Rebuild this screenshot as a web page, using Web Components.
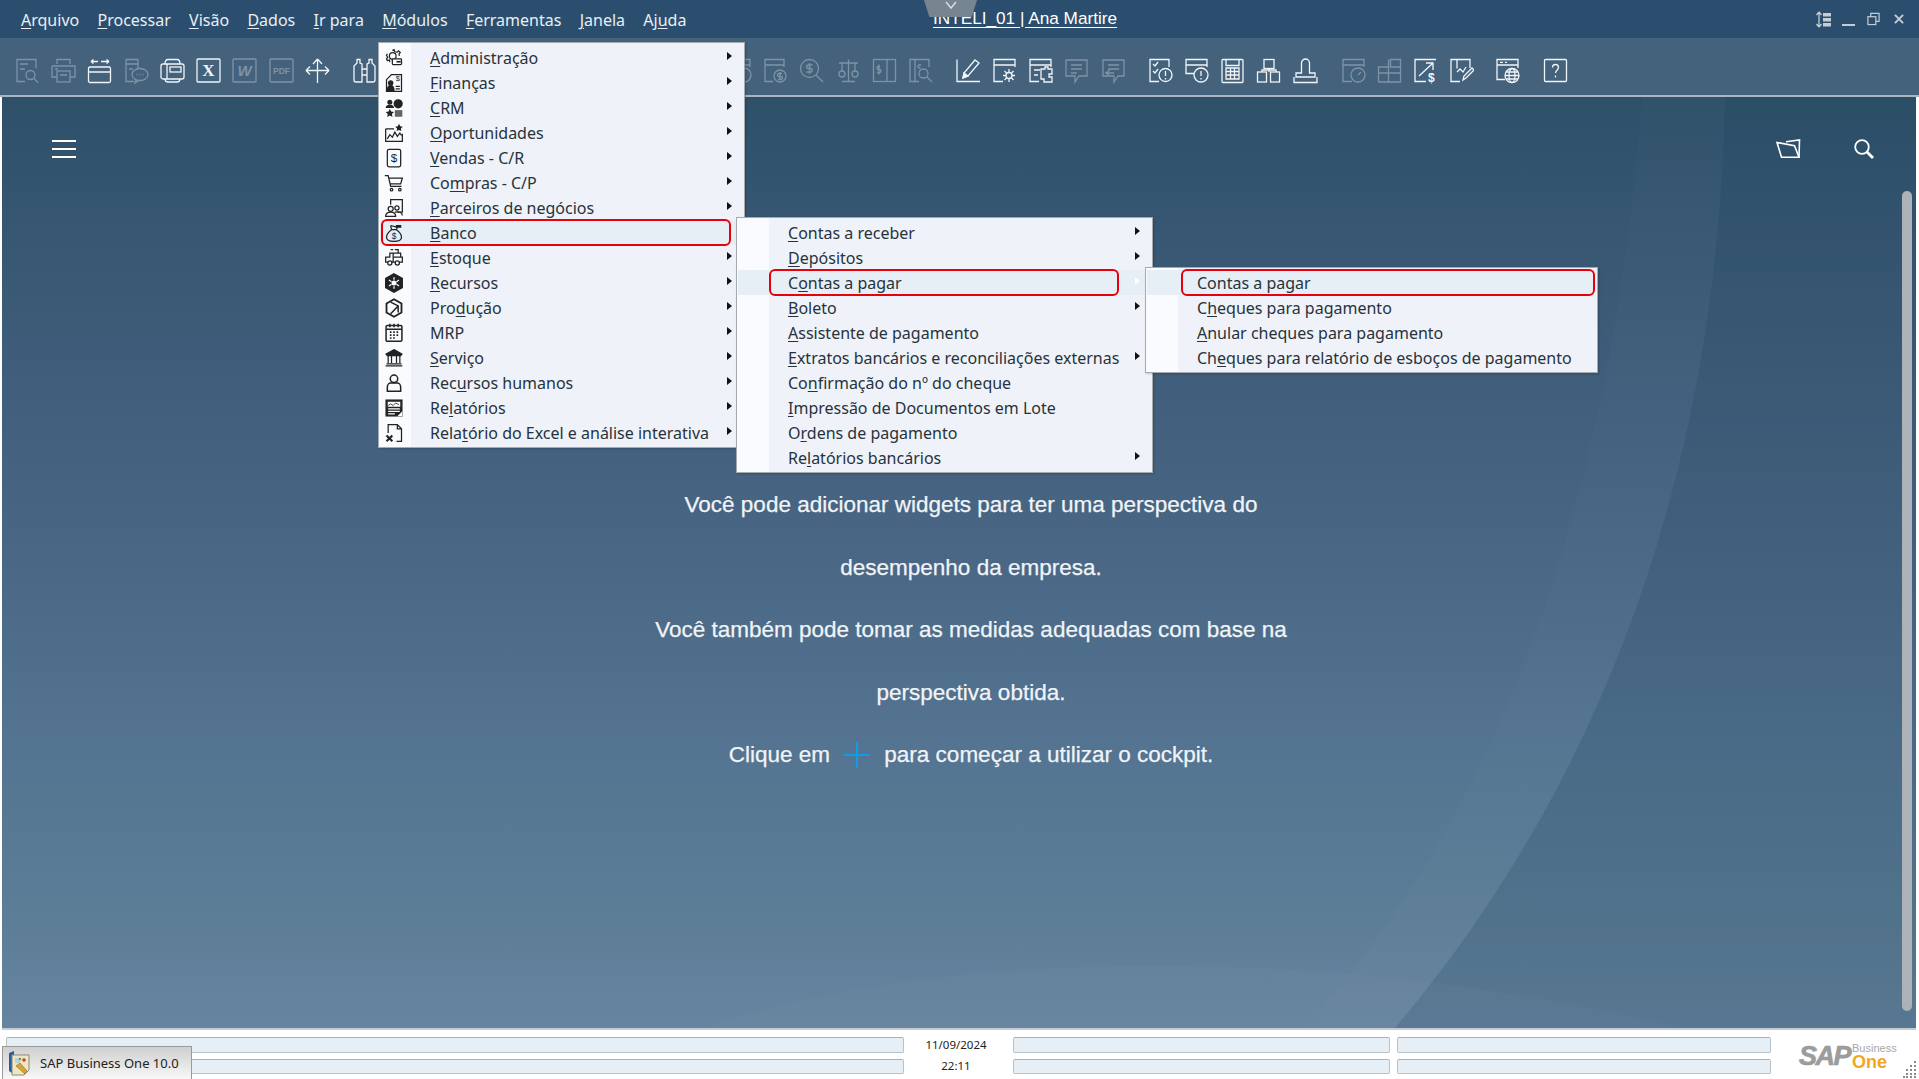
<!DOCTYPE html>
<html lang="pt-BR">
<head>
<meta charset="utf-8">
<title>SAP Business One</title>
<style>
  html, body { margin: 0; height: 100%; overflow: hidden; background: #fff; }
  sap-app { font-family: "Noto Sans", "Open Sans", sans-serif; }
  u { text-underline-offset: 2px; text-decoration-thickness: 1px; }
</style>
</head>
<body>
<sap-app>
  <title-bar></title-bar>
  <tool-bar></tool-bar>
  <cockpit-area></cockpit-area>
  <status-strip></status-strip>

  <pop-menu style="left:378px;top:42px;width:363px">
    <menu-row icon="admin" arrow><u>A</u>dministração</menu-row>
    <menu-row icon="fin" arrow><u>F</u>inanças</menu-row>
    <menu-row icon="crm" arrow><u>C</u>RM</menu-row>
    <menu-row icon="oport" arrow><u>O</u>portunidades</menu-row>
    <menu-row icon="vendas" arrow><u>V</u>endas - C/R</menu-row>
    <menu-row icon="cart" arrow>Co<u>m</u>pras - C/P</menu-row>
    <menu-row icon="partners" arrow><u>P</u>arceiros de negócios</menu-row>
    <menu-row icon="bag" selected style="--ring-l:1px;--ring-r:12px"><u>B</u>anco</menu-row>
    <menu-row icon="truck" arrow><u>E</u>stoque</menu-row>
    <menu-row icon="hex" arrow><u>R</u>ecursos</menu-row>
    <menu-row icon="cube" arrow>Pro<u>d</u>ução</menu-row>
    <menu-row icon="cal" arrow>MRP</menu-row>
    <menu-row icon="bank" arrow><u>S</u>erviço</menu-row>
    <menu-row icon="person" arrow>Rec<u>u</u>rsos humanos</menu-row>
    <menu-row icon="report" arrow>Re<u>l</u>atórios</menu-row>
    <menu-row icon="xls" arrow>Rela<u>t</u>ório do Excel e análise interativa</menu-row>
  </pop-menu>

  <pop-menu style="left:736px;top:217px;width:413px">
    <menu-row arrow><u>C</u>ontas a receber</menu-row>
    <menu-row arrow><u>D</u>epósitos</menu-row>
    <menu-row arrow selected style="--ring-l:31px;--ring-r:32px">C<u>o</u>ntas a pagar</menu-row>
    <menu-row arrow><u>B</u>oleto</menu-row>
    <menu-row><u>A</u>ssistente de pagamento</menu-row>
    <menu-row arrow><u>E</u>xtratos bancários e reconciliações externas</menu-row>
    <menu-row>Co<u>n</u>firmação do nº do cheque</menu-row>
    <menu-row><u>I</u>mpressão de Documentos em Lote</menu-row>
    <menu-row>O<u>r</u>dens de pagamento</menu-row>
    <menu-row arrow>Re<u>l</u>atórios bancários</menu-row>
  </pop-menu>

  <pop-menu style="left:1145px;top:267px;width:449px">
    <menu-row selected style="--ring-l:34px;--ring-r:1px">Contas a pagar</menu-row>
    <menu-row>C<u>h</u>eques para pagamento</menu-row>
    <menu-row><u>A</u>nular cheques para pagamento</menu-row>
    <menu-row>Ch<u>e</u>ques para relatório de esboços de pagamento</menu-row>
  </pop-menu>
</sap-app>

<script>
// toolbar glyphs, drawn on a 25x25 box
const TOOL = {
  find: '<path d="M21 10V1.500H2v22h8M5 6h8M5 11h5"/><circle cx="15.500" cy="17" r="4.500"/><path d="M19 20.500l4 4"/>',
  print: '<path d="M6 6V1.500h13V6M1 8h23v11h-5M6 19H1V8"/><rect x="6" y="13" width="13" height="11"/><path d="M4 11h3M9 17h7"/>',
  cal: '<rect x="1.500" y="9" width="22" height="15.500" rx="1.500"/><path d="M1.500 14h22M4 3.500h7M4 3.500l2.500-2M4 3.500l2.500 2M14 3.500h8M22 3.500l-2.500-2M22 3.500l-2.500 2"/>',
  chat: '<path d="M14 10V1.500H2v22h8M2 6h12M5 11h4"/><ellipse cx="16" cy="16.500" rx="8" ry="6"/><path d="M12 22l-1 3 4-2.500"/><path d="M12.500 16.500h1M15.500 16.500h1M18.500 16.500h1"/>',
  book: '<rect x="1" y="6" width="23" height="15" rx="2"/><path d="M5 6c0-3 1-4.500 3-4.500h9c2 0 3 1.500 3 4.500M5 21c0 2 1 3 3 3h9c2 0 3-1 3-3M7 6v15"/><rect x="10" y="9" width="11" height="5"/>',
  move: '<path d="M12.500 1v24M1 12.500h23M12.500 1L8 6M12.500 1L17 6M1 12.500L5 8.500M1 12.500l4 4M24 12.500l-4-4M24 12.500l-4 4"/>',
  bino: '<path d="M2 8v14a2 2 0 002 2h6V6L8 5V1.500H5V5zM23 8v14a2 2 0 01-2 2h-6V6l2-1V1.500h3V5zM10 11h5M10 17h5"/>',
  formc: '<path d="M21 9V1.500H2v22h8M2 7h19"/><circle cx="17" cy="18" r="6"/><path d="M17 14v8M19 15.500h-3a1.300 1.300 0 000 3h2a1.300 1.300 0 010 3h-3"/>',
  coin: '<circle cx="10.500" cy="10.500" r="9"/><path d="M10.500 5v11M13.500 7h-4.500a1.800 1.800 0 000 3.500h3a1.800 1.800 0 010 3.500H7.500M17 17l7 7"/>',
  scale: '<path d="M12.500 1.500v22M6 23.500h13M3 5h19M6 5v8M19 5v8"/><rect x="3" y="13" width="6" height="6" rx="3"/><rect x="16" y="13" width="6" height="6" rx="3"/>',
  split: '<rect x="1.500" y="1.500" width="22" height="22"/><path d="M15 1.500v22M8 8.500H6.500a1.300 1.300 0 000 3h1a1.300 1.300 0 010 3H5M6.800 6.500v10"/>',
  dsearch: '<path d="M21 9V1.500H2v22h9M7 1.500v22M13 7h-1.500a1.200 1.200 0 000 3h1"/><circle cx="15.500" cy="15.500" r="4.500"/><path d="M19 19l5 5"/>',
  pencil: '<path d="M2 1.500v22h23M8 20l1-5L20 2l4 3-11 13z"/><path d="M8 20l5-2-4-3z" fill="currentColor"/>',
  fgear: '<path d="M23 9V1.500H2v22h9M2 7h21"/><circle cx="17" cy="17.500" r="3"/><path d="M17 11v3M17 21v3M11 17.500h3M20 17.500h3M12.500 13l2 2M19.500 20l2 2M12.500 22l2-2M19.500 15l2-2"/>',
  puzzle: '<path d="M23 9V1.500H2v22h9M2 7h21M6 12h6M6 17h4"/><path d="M13 11h4v-2h3v2h4v5h-3v3h3v5h-8v-3h-3z"/>',
  bubble: '<path d="M2 2h21v16h-8l-4 6v-6H2zM7 7h11M7 11h11M7 15h6"/>',
  bubble2: '<path d="M2 2h21v16h-6l-4 6v-6H2zM7 7h11M7 11h11"/><path d="M4 15h9M9 12l-4 3 4 3"/>',
  chkdoc: '<path d="M21 9V1.500H2v22h9M5 6l2 2 3-4M5 13l2 2 3-4"/><circle cx="17.500" cy="17" r="6.500"/><path d="M17.500 13v5M17.500 20v1.500"/>',
  falert: '<path d="M23 9V1.500H2v14h8M2 7h21"/><circle cx="17" cy="17" r="7"/><path d="M17 13v5M17 20v1.500"/>',
  calc: '<rect x="2" y="1.500" width="21" height="23" rx="1"/><path d="M6 1.500v6h13v-6M6 10h13v11H6zM10.500 10v11M14.500 10v11M6 13.500h13M6 17h13"/>',
  org: '<rect x="8" y="1.500" width="10" height="9"/><rect x="1.500" y="14" width="9" height="10"/><rect x="14.500" y="14" width="9" height="10"/><path d="M13 10.500V14M6 14v-2h14v2"/>',
  stamp: '<path d="M8.500 11V5a4 4 0 018 0v6M8.500 11v4H3v4h19v-4h-5.500v-4"/><path d="M1 19v5.500h23V19"/>',
  gauge: '<path d="M23 9V1.500H2v22h9M2 7h21"/><circle cx="17" cy="17" r="7"/><path d="M17 17l3-3"/>',
  gift: '<path d="M1.500 24V9h10V1.500M1.500 24h22V9h-10V1.500h10V9M11.500 9v15M1.500 15h22"/>',
  arrow: '<path d="M23 1.500H2v22h11M6 18L20 5M13 5h7v7"/><text x="15" y="24" font-family="Liberation Sans" font-size="12" font-weight="700" fill="currentColor" stroke="none">$</text>',
  edit: '<path d="M21 10V1.500H2v22h9M8 1.500v9M8 14l3-3 3 3 3-5"/><path d="M14 22l1-4 8-8 2 2-8 8z"/>',
  globe: '<path d="M23 10V1.500H2v20h8M2 7h21M5 4.300h3M10 4.300h2"/><circle cx="17" cy="17.500" r="7"/><path d="M10 17.500h14M11 14h12M11 21h12"/><ellipse cx="17" cy="17.500" rx="3" ry="7"/>',
  help: '<rect x="1.500" y="1.500" width="22" height="22" rx="1"/><path d="M9.500 9.500c0-4 6-4 6 0 0 2.500-3 3-3 5.500M12.500 17.500v2"/>',
};

// menu glyphs, drawn on a 24x24 box
const MENU = {
  admin: '<path d="M10 3l2-1 1 2.500 3 .5 1.500-1.500 2 2L18 7l.5 2.500M4 7l-1 2 1.500 2L3 13l1 2 2.500-.500L7 17"/><circle cx="10.500" cy="9.500" r="4"/><rect x="10" y="13" width="11" height="7" rx="1" fill="#fff"/><path d="M15 16.500h5" stroke-width="2"/>',
  fin: '<path d="M9 2h12v20H3V8z"/><path d="M4 21c0-5 2-6 4-6s4 1 4 6z" fill="#222"/><circle cx="8" cy="12" r="2.500" fill="#222"/><path d="M14 16h5M14 19h5"/><text x="14" y="10" font-size="9" fill="#222" stroke="none" font-family="Liberation Sans">$</text>',
  crm: '<g fill="#222" stroke="none"><circle cx="7" cy="5" r="3"/><path d="M2 12c0-3 2-4 5-4s5 1 5 4z"/><circle cx="17" cy="7" r="5.500"/><path d="M7 13l1.500 3.300 3.500.4-2.500 2.500.7 3.500L7 21l-3.200 1.700.7-3.500L2 16.700l3.500-.4z"/><path fill="#666" d="M13 14.500h9v8h-9z"/></g>',
  oport: '<path d="M2 7h10M2 7v15h20v-9M4 19l3-5 3 3 3-6 3 5 3-4 2 3"/><path d="M18 1l1.500 3 3 .5-2.200 2.200.5 3L18 8.300l-2.800 1.400.5-3-2.200-2.200 3-.5z" fill="#222" stroke="none"/>',
  vendas: '<rect x="4" y="1.500" width="16" height="21" rx="2"/><text x="12" y="17" font-size="14" text-anchor="middle" fill="#222" stroke="none" font-family="Liberation Sans">$</text>',
  cart: '<path d="M1 3h4l3 13h13M6 6h16l-2 7H8"/><circle cx="9" cy="20" r="1.500"/><circle cx="19" cy="20" r="1.500"/>',
  partners: '<path d="M8 8V2h14v15h-6"/><circle cx="8" cy="13" r="3"/><circle cx="15.500" cy="12" r="2.500"/><path d="M2 22c0-4 2-5 6-5s6 1 6 5zM13 17c5-1 9 0 9 4"/>',
  bag: '<path d="M8 3l7 2 5-2M9 8h6M9 8C5 11 3 14 3 17c0 3 3 5 9 5s9-2 9-5c0-3-2-6-6-9M9 8L8 3M15 8l1-3"/><path d="M15 3h5v2h-5z" fill="#222"/><text x="12" y="19" font-size="10" text-anchor="middle" fill="#222" stroke="none" font-family="Liberation Sans">$</text>',
  truck: '<path d="M2 16V11h5V6h4v5M11 6h9v5M2 11v6h3M9 17h5M18 17h4v-6H11v6M13 2h4v4M8 2h3"/><circle cx="7" cy="18" r="2.500"/><circle cx="16" cy="18" r="2.500"/>',
  hex: '<path d="M12 1l10 5.500v11L12 23 2 17.500v-11z" fill="#222"/><circle cx="12" cy="12" r="3" fill="#fff" stroke="none"/><path d="M12 5v3M12 16v3M6 8.500l3 2M18 8.500l-3 2M6 15.500l3-2M18 15.500l-3-2" stroke="#fff"/>',
  cube: '<path d="M12 1.500l9 5v11l-9 5-9-5v-11z" stroke-width="2.200"/><path d="M8 5l9 4.500v8M17 9.500L8 19" stroke-width="1.800"/>',
  cal: '<rect x="2.500" y="3" width="19" height="19" rx="1.500" stroke-width="1.800"/><path d="M2.500 7.500h19M7 1v4M12 1v4M17 1v4" stroke-width="1.800"/><path d="M7 11h2M11 11h2M15 11h2M7 14.500h2M11 14.500h2M15 14.500h2M7 18h2M11 18h2" stroke-width="2"/>',
  bank: '<path d="M12 2l10 5.500H2z" fill="#222"/><path d="M3 9h18M5 10v8M9 10v8M15 10v8M19 10v8M3 19h18M2 21.500h20" stroke-width="1.500"/>',
  person: '<circle cx="12" cy="7" r="4.500" stroke-width="1.800"/><path d="M4 22v-5c0-3 2-5 4-5h8c2 0 4 2 4 5v5z" stroke-width="1.800"/>',
  report: '<rect x="2.500" y="2.500" width="19" height="19" fill="#222"/><rect x="4.500" y="4.500" width="15" height="6" fill="#fff" stroke="none"/><path d="M5 9l3-2 3 2 3-3 4 2" stroke-width="1"/><path d="M5 13h14M5 16h14M5 19h8" stroke="#fff" stroke-width="1.300"/><path d="M16 22l6-6v6z" fill="#fff" stroke="none"/>',
  xls: '<path d="M5 12V2h11l5 5v15h-6M16 2v5h5"/><path d="M3 15l7 7M10 15l-7 7" stroke-width="2.500"/>',
};

class SapApp extends HTMLElement {
  constructor() {
    super();
    this.attachShadow({ mode: 'open' }).innerHTML = `
      <style>
        :host { display: grid; grid-template-rows: 38px 59px 933px 49px; position: relative; height: 1079px; overflow: hidden; }
      </style>
      <slot></slot>`;
  }
}

class TitleBar extends HTMLElement {
  constructor() {
    super();
    const items = [['A','rquivo'],['P','rocessar'],['V','isão'],['D','ados'],['I','r para'],['M','ódulos'],['F','erramentas'],['J','anela']];
    this.attachShadow({ mode: 'open' }).innerHTML = `
      <style>
        :host { display: grid; grid-template-columns: 933px auto 1fr; align-items: center; background: #2b4e6e; color: #e9eef3; position: relative; }
        nav { display: flex; gap: 18.300px; padding: 1px 0 0 21px; font: 16px "Noto Sans", sans-serif; }
        u { text-underline-offset: 2px; text-decoration-thickness: 1px; }
        .title { font: 17.200px "Liberation Sans", sans-serif; color: #fff; text-decoration: underline; text-underline-offset: 3px; white-space: nowrap; margin-top: -2px; }
        .ctl { display: flex; justify-content: flex-end; align-items: center; padding-right: 15px; color: #c4ccd4; }
        .ctl svg + svg { margin-left: 10px; }
        .ctl svg:nth-child(3) { margin-left: 12px; }
        .ctl svg:nth-child(4) { margin-left: 14px; }
        .tab { position: absolute; left: 924px; top: 0; width: 53px; height: 17px; background: #76858f; clip-path: polygon(0 0, 100% 0, 90% 100%, 10% 100%); display: flex; justify-content: center; }
        svg { display: block; }
      </style>
      <nav>
        ${items.map(i => `<span><u>${i[0]}</u>${i[1]}</span>`).join('')}
        <span>Aj<u>u</u>da</span>
      </nav>
      <div class="title">INTELI_01 | Ana Martire</div>
      <div class="ctl">
        <svg width="16" height="17" viewBox="0 0 16 17" fill="none" stroke="currentColor"><path d="M3 1v15M3 1L.5 4M3 1l2.500 3M3 16L.5 13M3 16l2.500-3" stroke-width="1.300"/><path d="M7 2h8v3.500H7zM7 7h8v3.500H7zM7 12h8v3.500H7z" fill="currentColor" stroke="none"/></svg>
        <svg width="13" height="17" viewBox="0 0 13 17"><path d="M0 14h13" stroke="currentColor" stroke-width="2"/></svg>
        <svg width="13" height="14" viewBox="0 0 14 14" fill="none" stroke="currentColor" stroke-width="1.300"><rect x="1" y="4.500" width="8.500" height="8.500"/><path d="M4 4.500V1h9v8.500H9.500"/></svg>
        <svg width="10" height="10" viewBox="0 0 11 11" stroke="currentColor" stroke-width="2.200"><path d="M1 1l9 9M10 1l-9 9"/></svg>
      </div>
      <div class="tab"><svg width="14" height="12" viewBox="0 0 14 12" fill="none" stroke="#d7dde2" stroke-width="1.500"><path d="M2 2l5 6 5-6"/></svg></div>`;
  }
}

class ToolIcon extends HTMLElement {
  connectedCallback() {
    const dim = this.hasAttribute('dim');
    const name = this.getAttribute('name');
    const label = { x: ['X', 'Liberation Serif', 17, 800], w: ['W', 'Liberation Sans', 15, 700], pdf: ['PDF', 'Liberation Sans', 8.5, 700] }[name];
    const body = label
      ? `<rect x="1" y="1" width="23" height="23" rx="1"/><text x="12.500" y="${name === 'pdf' ? 15.500 : 18}" text-anchor="middle" stroke="none" fill="currentColor" font-family="${label[1]}" font-size="${label[2]}" font-weight="${label[3]}" font-style="${name === 'w' ? 'italic' : 'normal'}">${label[0]}</text>`
      : TOOL[name];
    this.attachShadow({ mode: 'open' }).innerHTML = `
      <style>
        :host { display: flex; width: 36.300px; justify-content: center; color: ${dim ? '#7d93a6' : '#f2f5f7'}; }
        svg { width: 25px; height: 26px; display: block; }
      </style>
      <svg viewBox="0 0 25 26" fill="none" stroke="currentColor" stroke-width="1.300">${body}</svg>`;
  }
}

class ToolBar extends HTMLElement {
  constructor() {
    super();
    const groups = [
      [9, ['find.', 'print.', 'cal', 'chat.', 'book', 'x', 'w.', 'pdf.', 'move']],
      [10.7, ['bino']],
      [338.6, ['falert.', 'formc.', 'coin.', 'scale.', 'split.', 'dsearch.']],
      [10.7, ['pencil', 'fgear', 'puzzle', 'bubble.', 'bubble2.']],
      [10.7, ['chkdoc', 'falert', 'calc', 'org', 'stamp']],
      [11.5, ['gauge.', 'gift.', 'arrow', 'edit']],
      [9.5, ['globe']],
      [11.5, ['help']],
    ];
    this.attachShadow({ mode: 'open' }).innerHTML = `
      <style>
        :host { display: flex; align-items: center; background: #44627c; border-bottom: 2px solid #a9b5c0; box-sizing: border-box; padding-top: 9px; }
      </style>
      ${groups.map(g => g[1].map((n, i) => {
        const dim = n.endsWith('.');
        return `<tool-icon name="${n.replace('.', '')}" ${dim ? 'dim' : ''} style="${i === 0 ? 'margin-left:' + g[0] + 'px' : ''}"></tool-icon>`;
      }).join('')).join('')}`;
  }
}

class CockpitArea extends HTMLElement {
  constructor() {
    super();
    this.attachShadow({ mode: 'open' }).innerHTML = `
      <style>
        :host { display: block; position: relative; margin: 0 3px 0 2px; overflow: hidden; color: #f1f4f7; border-bottom: 2px solid #c3ccd4;
          background: linear-gradient(180deg, #2e5069 0%, #3a5975 20%, #4a6886 50%, #537391 68%, #5b7c95 85%, #66849f 100%); }
        .bg { position: absolute; inset: 0; width: 100%; height: 100%; }
        header { position: relative; height: 104px; display: flex; align-items: center; padding: 0 42px 0 50px; color: #fff; }
        .burger { width: 24px; height: 18px; border-top: 2.500px solid; border-bottom: 2.500px solid; box-sizing: border-box; position: relative; }
        .burger::after { content: ""; position: absolute; left: 0; right: 0; top: 5.500px; height: 2.500px; background: currentColor; }
        .tools { margin-left: auto; display: flex; gap: 53px; align-items: center; }
        .msg { position: relative; padding: 273px 0 0 24px; font: 22.500px/62.600px "Liberation Sans", sans-serif; text-align: center; -webkit-text-stroke: .25px currentColor; }
        .msg svg { vertical-align: -6px; margin: 0 14px 0 8px; }
        .bar { position: absolute; right: 4px; top: 94px; width: 10px; height: 820px; border-radius: 5px; background: #adb2b9; }
      </style>
      <svg class="bg" viewBox="0 0 1914 933" preserveAspectRatio="none">
        <path d="M1723 0C1718 300 1640 640 1393 933H1914V0z" fill="#23475f" fill-opacity=".2"/>
        <path d="M1640 0H1723C1718 300 1640 640 1393 933H1300C1500 720 1610 400 1640 0z" fill="#fff" fill-opacity=".015"/>
        <path d="M700 933C900 860 1300 840 1680 933z" fill="#fff" fill-opacity=".02"/>
      </svg>
      <header>
        <div class="burger"></div>
        <div class="tools">
          <svg width="25" height="20" viewBox="0 0 25 20" fill="none" stroke="currentColor" stroke-width="1.600"><path d="M1 3.500l17.500 3.300 4.500 11.500H5.500z"/><path d="M10 2.700L23.500 1 23 18.300"/></svg>
          <svg width="20" height="20" viewBox="0 0 20 20" fill="none" stroke="currentColor" stroke-width="1.800"><circle cx="8" cy="8" r="6.800"/><path d="M13 13l6 6" stroke-width="2.800"/></svg>
        </div>
      </header>
      <div class="msg">
        <div>Você pode adicionar widgets para ter uma perspectiva do</div>
        <div>desempenho da empresa.</div>
        <div>Você também pode tomar as medidas adequadas com base na</div>
        <div>perspectiva obtida.</div>
        <div>Clique em <svg width="26" height="26" viewBox="0 0 26 26" stroke="#0e9de6" stroke-width="2"><path d="M0 13h26M13 0v26"/></svg>para começar a utilizar o cockpit.</div>
      </div>
      <div class="bar"></div>`;
  }
}

class StatusStrip extends HTMLElement {
  constructor() {
    super();
    this.attachShadow({ mode: 'open' }).innerHTML = `
      <style>
        :host { display: grid; position: relative; background: #fff; box-sizing: border-box; padding: 7px 0 0 6px;
          grid-template-columns: 898px 109px 377px 7px 374px 1fr; grid-template-rows: 16px 15px; row-gap: 6px; align-items: center; }
        .f { background: #e6eef6; border: 1px solid #b9c1c8; border-top-color: #a8b0b8; box-sizing: border-box; height: 100%; border-radius: 2px; }
        .t { font: 11.500px "Noto Sans", sans-serif; color: #222; text-align: center; padding-right: 5px; margin-top: -2px; }
        .logo { grid-column: 6; grid-row: 1 / 3; position: relative; height: 30px; margin-left: 28px; width: 100px; font-family: "Liberation Sans", sans-serif; }
        .sap { position: absolute; left: 0; top: 0; font: italic 800 27px/30px "Liberation Sans", sans-serif; color: #9c9c9c; letter-spacing: -1.500px; -webkit-text-stroke: .7px #9c9c9c; }
        .biz { position: absolute; left: 53px; top: 1px; font-size: 11px; color: #a8a8a8; }
        .one { position: absolute; left: 53px; top: 12px; font: 700 18px/18px "Liberation Sans", sans-serif; color: #f2a71e; }
        .task { position: absolute; left: 2px; bottom: 0; width: 190px; height: 33px; box-sizing: border-box; border: 1px solid #9a9a9a; border-bottom: 0; background: linear-gradient(180deg, #cfcfcf, #f8f8f8); display: flex; align-items: center; gap: 8px; padding-left: 4px; font: 13px "Noto Sans", sans-serif; color: #222; }
        .grip { position: absolute; right: 2px; bottom: 1px; }
      </style>
      <div class="f"></div><div class="t">11/09/2024</div><div class="f"></div><div></div><div class="f"></div>
      <div class="logo"><span class="sap">SAP</span><span class="biz">Business</span><span class="one">One</span></div>
      <div class="f"></div><div class="t">22:11</div><div class="f"></div><div></div><div class="f"></div>
      <div class="task">
        <svg width="25" height="26" viewBox="0 0 25 26"><path d="M2 3l5-2v6H5v16l-3-2z" fill="#2c5f98"/><path d="M5 5h17v15l-5 5H5z" fill="#efe6c6" stroke="#8b8b7c"/><path d="M8 8h5v5H8z" fill="#bcd0dc"/><circle cx="17" cy="10" r="1.800" fill="#c0492e"/><circle cx="13" cy="9" r="1.200" fill="#5c9a52"/><path d="M9 16l4-3 7 8-2 3z" fill="#d9a534" stroke="#8a6a20" stroke-width=".6"/></svg>
        <span>SAP Business One 10.0</span>
      </div>
      <svg class="grip" width="14" height="18" viewBox="0 0 14 18" fill="#8a8a8a"><path d="M11 1h2v2h-2zM11 5h2v2h-2zM7 5h2v2H7zM11 9h2v2h-2zM7 9h2v2H7zM3 9h2v2H3zM11 13h2v2h-2zM7 13h2v2H7zM3 13h2v2H3zM11 16h2v2h-2zM7 16h2v2H7zM3 16h2v2H3zM0 16h2v2H0z"/></svg>`;
  }
}

class PopMenu extends HTMLElement {
  constructor() {
    super();
    this.attachShadow({ mode: 'open' }).innerHTML = `
      <style>
        :host { display: block; position: absolute; box-sizing: content-box; border: 1px solid #a7abb0; padding: 2px 1px;
          background: linear-gradient(90deg, #f9fbff 32px, #eff2f8 32px); color: #27333c; box-shadow: 1px 1px 2px rgba(0,0,0,.2); }
      </style>
      <slot></slot>`;
  }
}

class MenuRow extends HTMLElement {
  connectedCallback() {
    const icon = MENU[this.getAttribute('icon')];
    this.attachShadow({ mode: 'open' }).innerHTML = `
      <style>
        :host { display: flex; align-items: center; position: relative; height: 25px; font: 16px/25px "Noto Sans", sans-serif; white-space: nowrap; }
        :host([selected]) { background: #e6eef6; }
        :host([selected]) .ring { position: absolute; top: 0; bottom: 0; left: var(--ring-l); right: var(--ring-r); border: 2px solid #e8000d; border-radius: 6px; margin: -1px 0; }
        .ic { width: 28px; flex: none; margin-right: 22px; display: flex; justify-content: center; }
        .ic svg { width: 20px; height: 20px; display: block; }
        .txt { padding-top: 1px; }
        .arrow { margin-left: auto; margin-right: 11px; width: 0; height: 0; border-left: 5px solid #111; border-top: 4.500px solid transparent; border-bottom: 4.500px solid transparent; margin-top: -4px; }
        :host([selected]) .arrow { border-left-color: #fff; }
      </style>
      <span class="ic">${icon ? `<svg viewBox="0 0 24 24" fill="none" stroke="#222" stroke-width="1.500">${icon}</svg>` : ''}</span>
      <span class="txt"><slot></slot></span>
      ${this.hasAttribute('arrow') ? '<span class="arrow"></span>' : ''}
      <span class="ring"></span>`;
  }
}

customElements.define('sap-app', SapApp);
customElements.define('title-bar', TitleBar);
customElements.define('tool-icon', ToolIcon);
customElements.define('tool-bar', ToolBar);
customElements.define('cockpit-area', CockpitArea);
customElements.define('status-strip', StatusStrip);
customElements.define('pop-menu', PopMenu);
customElements.define('menu-row', MenuRow);
</script>
</body>
</html>
